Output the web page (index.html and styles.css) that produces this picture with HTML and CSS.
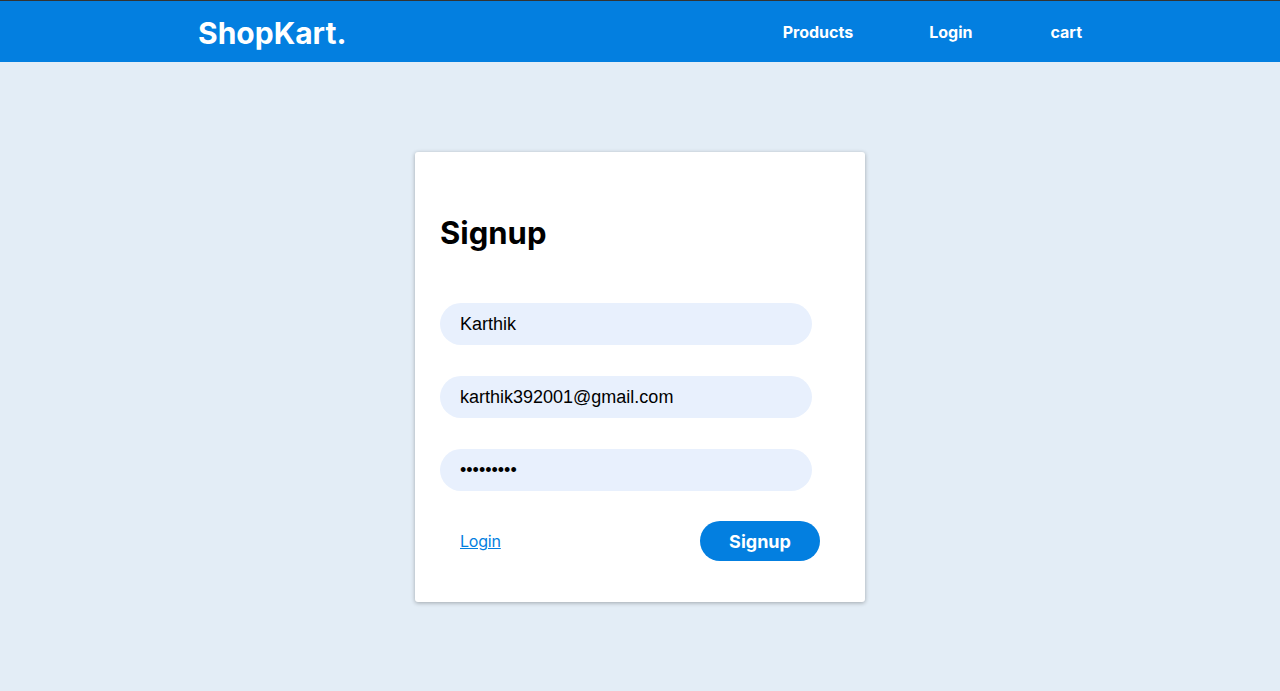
FILE: index.html
```html
<!DOCTYPE html>
<html lang="en">
<head>
<meta charset="utf-8">
<title>ShopKart - Signup</title>
<link rel="stylesheet" href="styles.css">
</head>
<body>
<header class="topbar">
  <div class="topbar-inner">
    <a class="logo" href="#">ShopKart.</a>
    <nav class="nav">
      <a href="#">Products</a>
      <a href="#">Login</a>
      <a href="#">cart</a>
    </nav>
  </div>
</header>
<main class="main">
  <form class="card">
    <h1 class="title">Signup</h1>
    <input class="field" type="text" value="Karthik">
    <input class="field" type="email" value="karthik392001@gmail.com">
    <input class="field" type="password" value="123456789">
    <div class="actions">
      <a class="link" href="#">Login</a>
      <button class="btn" type="button">Signup</button>
    </div>
  </form>
</main>
</body>
</html>
```

FILE: styles.css
```css
* { box-sizing: border-box; }
html, body { margin: 0; padding: 0; }
body {
  background: #e3edf6;
  font-family: Inter, "Liberation Sans", sans-serif;
  min-height: 691px;
}
.topbar {
  background: #037fe0;
  border-top: 1px solid #333;
  height: 62px;
}
.topbar-inner {
  display: flex;
  align-items: center;
  justify-content: space-between;
  height: 61px;
  padding: 0 198px;
}
.logo {
  color: #fff;
  text-decoration: none;
  font-weight: 700;
  font-size: 30px;
  padding-top: 2px;
}
.nav {
  display: flex;
  gap: 78px;
}
.nav a {
  color: #fff;
  text-decoration: none;
  font-weight: 700;
  font-size: 16px;
}
.nav a:first-child {
  margin-right: -2px;
}
.main {
  display: flex;
  justify-content: center;
  padding-top: 90px;
}
.card {
  width: 450px;
  height: 450px;
  background: #fff;
  border-radius: 3px;
  box-shadow: 0 1px 4px rgba(0,0,0,0.3);
  padding: 56px 25px 0 25px;
  display: flex;
  flex-direction: column;
}
.title {
  margin: 0 0 45px 0;
  font-size: 31px;
  font-weight: 700;
  color: #000;
  line-height: 50px;
}
.field {
  width: 372px;
  height: 42px;
  border: none;
  border-radius: 21px;
  background: #e8f0fd;
  padding: 0 20px;
  font-family: "Liberation Sans", Arial, sans-serif;
  font-size: 18px;
  color: #000;
  margin-bottom: 31px;
  outline: none;
}
.actions {
  width: 380px;
  display: flex;
  align-items: center;
  justify-content: space-between;
  padding-left: 20px;
  margin-top: -1px;
}
.link {
  color: #037fe0;
  font-size: 16px;
  letter-spacing: -0.2px;
}
.btn {
  width: 120px;
  height: 40px;
  border: none;
  border-radius: 20px;
  background: #037fe0;
  color: #fff;
  font-family: Inter, "Liberation Sans", sans-serif;
  font-weight: 700;
  font-size: 18px;
  cursor: pointer;
}
```
